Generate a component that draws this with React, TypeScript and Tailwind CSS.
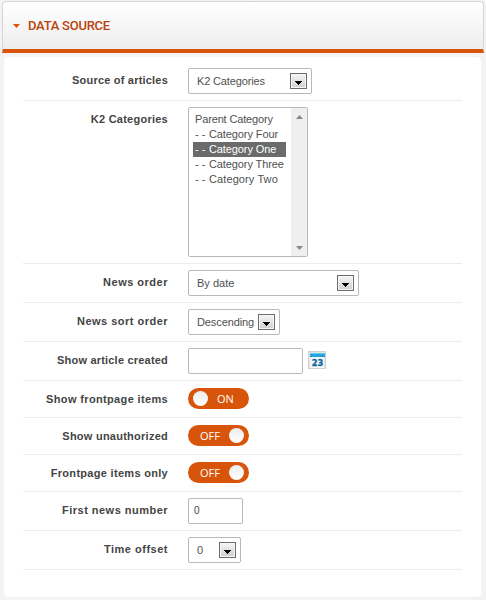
import type { ReactNode } from "react";

function Row({ label, height, tracking, children }: { label: string; height: string; tracking: string; children: ReactNode }) {
  return (
    <div className={`flex items-start border-b border-[#ececec] ${height}`}>
      <div className={`mt-[10px] flex w-[145px] justify-end text-[11px] leading-4 font-bold whitespace-nowrap text-[#444] ${tracking}`}>
        {label}
      </div>
      <div className="ml-5 flex pt-[6px]">{children}</div>
    </div>
  );
}

function Select({ value, width, tracking = "" }: { value: string; width: string; tracking?: string }) {
  return (
    <div className={`flex h-[26px] items-center justify-between rounded-[2px] border border-[#b8b8b8] bg-white pr-1 pl-2 ${width}`}>
      <span className={`text-[11px] leading-4 whitespace-nowrap text-[#505050] ${tracking}`}>{value}</span>
      <span className="flex h-4 w-[17px] shrink-0 items-center justify-center border border-[#6c6c6c] bg-linear-to-b from-[#f6f6f6] to-[#cfcfcf] shadow-[inset_0_0_0_1px_#f7f7f7]">
        <svg width="7" height="4" viewBox="0 0 7 4" className="mt-[3px]" shapeRendering="crispEdges">
          <path d="M0 0h7v1H6v1H5v1H4v1H3V3H2V2H1V1H0z" fill="#000" />
        </svg>
      </span>
    </div>
  );
}

function Toggle({ on }: { on: boolean }) {
  return (
    <div className={`mt-px flex h-[21px] w-[61px] items-center rounded-full bg-[#d8540a] px-[5px] ${on ? "" : "flex-row-reverse"}`}>
      <span className="size-[15px] shrink-0 rounded-full bg-linear-to-b from-[#ececec] to-white" />
      <span className={`flex-1 font-['Open_Sans',sans-serif] text-[11px] leading-[21px] font-medium text-white ${on ? "pl-[9px]" : "pl-[7px]"}`}>
        {on ? "ON" : "OFF"}
      </span>
    </div>
  );
}

const categories = [
  { prefix: "", name: "Parent Category", tracking: "tracking-[-0.15px]" },
  { prefix: "- -", name: "Category Four", tracking: "tracking-[-0.1px]" },
  { prefix: "- -", name: "Category One", tracking: "tracking-[-0.1px]" },
  { prefix: "- -", name: "Category Three", tracking: "tracking-[-0.1px]" },
  { prefix: "- -", name: "Category Two", tracking: "tracking-[0.1px]" },
];

function CategoryList() {
  return (
    <div className="flex h-[150px] w-[120px] rounded-[2px] border border-[#b8b8b8] bg-white">
      <div className="flex-1 pt-1 pl-1">
        {categories.map((c, i) => (
          <div
            key={c.name}
            className={`flex h-[15px] w-[93px] pl-[2px] text-[11px] leading-[15px] whitespace-nowrap ${i === 2 ? "bg-[#6b6b6b] text-white" : "text-[#505050]"}`}
          >
            {c.prefix && <span className="w-[14px]">{c.prefix}</span>}
            <span className={c.tracking}>{c.name}</span>
          </div>
        ))}
      </div>
      <div className="flex w-4 flex-col items-center justify-between bg-[#efefef] pt-[7px] pb-[6px]">
        <svg width="7" height="4" viewBox="0 0 7 4">
          <path d="M0 4 3.5 0 7 4z" fill="#888" />
        </svg>
        <svg width="7" height="4" viewBox="0 0 7 4">
          <path d="M0 0 3.5 4 7 0z" fill="#888" />
        </svg>
      </div>
    </div>
  );
}

function CalendarIcon() {
  return (
    <svg width="18" height="18" viewBox="0 0 18 18" className="mt-[3px] ml-[5px]">
      <rect x=".5" y=".5" width="17" height="17" fill="#e4e4e4" stroke="#d0d0d0" />
      <rect x="2" y="6" width="14" height="11" fill="#f3f7f9" />
      <rect x="2" y="2" width="15" height="4" fill="#27a5dc" />
      <path d="M2 2h15v1H2z" fill="#5cc8ee" />
      <path d="M3 5h1v1H3zM14 5h1v1h-1z" fill="#126a99" />
      <text x="9.5" y="15" textAnchor="middle" fontFamily="DejaVu Sans" fontWeight="bold" fontSize="9.5" textLength="11.5" lengthAdjust="spacingAndGlyphs" fill="#0d6698" stroke="#0d6698" strokeWidth=".3">
        23
      </text>
    </svg>
  );
}

export default function App() {
  return (
    <div className="h-[600px] w-[486px] bg-[#f3f3f3] px-[2px] pt-px font-['Liberation_Sans',Arial,sans-serif]">
      <header className="flex h-[52px] w-[482px] items-center rounded-t-[4px] border border-b-4 border-[#d6d6d6] border-b-[#d8540a] bg-linear-to-b from-white to-[#eeeeee] pl-[10px]">
        <svg width="7" height="4" viewBox="0 0 7 4">
          <path d="M0 0h7L3.5 4z" fill="#d8540a" />
        </svg>
        <h1 className="ml-2 font-[Roboto,sans-serif] text-[13px] leading-4 font-medium tracking-[-0.25px] text-[#b8430d]">DATA SOURCE</h1>
      </header>
      <main className="mt-1 ml-[2px] h-[540px] w-[477px] rounded-[4px] bg-white px-[19px] pt-[5px]">
        <Row label="Source of articles" height="h-[39px]" tracking="tracking-[0.2px]">
          <Select value="K2 Categories" width="w-[124px]" tracking="tracking-[-0.15px]" />
        </Row>
        <Row label="K2 Categories" height="h-[163px]" tracking="tracking-[0.25px]">
          <CategoryList />
        </Row>
        <Row label="News order" height="h-[39px]" tracking="tracking-[0.5px]">
          <Select value="By date" width="w-[171px]" />
        </Row>
        <Row label="News sort order" height="h-[39px]" tracking="tracking-[0.48px]">
          <Select value="Descending" width="w-[92px]" tracking="tracking-[-0.1px]" />
        </Row>
        <Row label="Show article created" height="h-[39px]" tracking="tracking-[0.2px]">
          <div className="h-[26px] w-[115px] rounded-[2px] border border-[#b8b8b8] bg-white" />
          <CalendarIcon />
        </Row>
        <Row label="Show frontpage items" height="h-[37px]" tracking="tracking-[0.35px]">
          <Toggle on />
        </Row>
        <Row label="Show unauthorized" height="h-[37px]" tracking="tracking-[0.25px]">
          <Toggle on={false} />
        </Row>
        <Row label="Frontpage items only" height="h-[37px]" tracking="tracking-[0.3px]">
          <Toggle on={false} />
        </Row>
        <Row label="First news number" height="h-[39px]" tracking="tracking-[0.48px]">
          <div className="h-[26px] w-[55px] rounded-[2px] border border-[#b8b8b8] bg-white pl-[5px] text-[10px] leading-6 text-[#444]">0</div>
        </Row>
        <Row label="Time offset" height="h-[39px]" tracking="tracking-[0.5px]">
          <Select value="0" width="w-[53px]" />
        </Row>
      </main>
    </div>
  );
}
